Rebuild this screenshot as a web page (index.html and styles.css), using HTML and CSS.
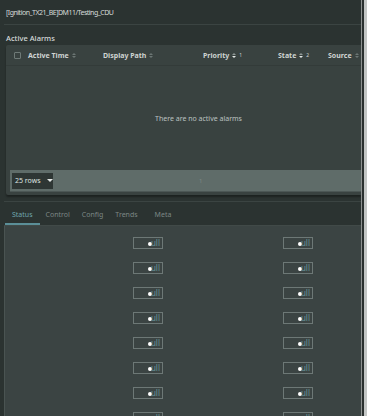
FILE: index.html
```html
<!DOCTYPE html>
<html lang="en">
<head>
  <meta charset="UTF-8">
  <meta name="viewport" content="width=device-width, initial-scale=1.0">
  <title>Testing_CDU</title>
  <link rel="stylesheet" href="styles.css">
</head>
<body>

  <div class="frame">
    <div class="main">
      <p class="title">[Ignition_TX21_BE]DM11/Testing_CDU</p>

      <p class="section-label">Active Alarms</p>
      <div class="alarm-panel">
        <div class="alarm-header">
          <span class="col col-check"><span class="checkbox"></span></span>
          <span class="col col-time">Active Time <span class="sort"></span></span>
          <span class="col col-path">Display Path <span class="sort"></span></span>
          <span class="col col-priority">Priority <span class="sort sort-on"></span><sup>1</sup></span>
          <span class="col col-state">State <span class="sort sort-on"></span><sup>2</sup></span>
          <span class="col col-source">Source <span class="sort"></span></span>
        </div>
        <div class="alarm-body">There are no active alarms</div>
        <div class="alarm-footer">
          <span class="rows-select">25 rows <span class="caret"></span></span>
          <span class="page-num">1</span>
        </div>
      </div>

      <div class="tabs">
        <span class="tab active">Status</span>
        <span class="tab">Control</span>
        <span class="tab">Config</span>
        <span class="tab">Trends</span>
        <span class="tab">Meta</span>
      </div>

      <div class="status-grid">
        <span class="led"><i></i>ull</span><span class="led"><i></i>ull</span>
        <span class="led"><i></i>ull</span><span class="led"><i></i>ull</span>
        <span class="led"><i></i>ull</span><span class="led"><i></i>ull</span>
        <span class="led"><i></i>ull</span><span class="led"><i></i>ull</span>
        <span class="led"><i></i>ull</span><span class="led"><i></i>ull</span>
        <span class="led"><i></i>ull</span><span class="led"><i></i>ull</span>
        <span class="led"><i></i>ull</span><span class="led"><i></i>ull</span>
        <span class="led"><i></i>ull</span><span class="led"><i></i>ull</span>
      </div>
    </div>

    <div class="scrollbar"><div class="thumb"></div></div>
  </div>

</body>
</html>
```

FILE: styles.css
```css
body {
  margin: 0;
  background-color: #2b3331;
  color: #c9cfcd;
  font-family: "Noto Sans", "Open Sans", sans-serif;
  font-size: 7px;
  overflow: hidden;
}

p {
  margin: 0;
}

.frame {
  display: flex;
  width: 367px;
  height: 416px;
  overflow: hidden;
}

.main {
  flex: 1;
  min-width: 0;
  display: flex;
  flex-direction: column;
}

.main > * {
  flex-shrink: 0;
}

.title {
  height: 24px;
  line-height: 25px;
  margin-left: 4px;
  padding-left: 2px;
  border-bottom: 1px solid #3b4442;
  color: #d6dbd9;
  letter-spacing: -0.5px;
}

.section-label {
  padding: 7px 0 0 6px;
  height: 13px;
  line-height: 13px;
  font-size: 7.5px;
  font-weight: 500;
  color: #d6dbd9;
}

.alarm-panel {
  margin-left: 6px;
  height: 150px;
  background-color: #394240;
  border-radius: 2px 0 0 2px;
  box-shadow: 0 2px 2px rgba(0, 0, 0, 0.35);
  display: flex;
  flex-direction: column;
}

.alarm-header {
  height: 20px;
  flex-shrink: 0;
  display: flex;
  align-items: center;
  border-bottom: 1px solid #333b39;
  font-weight: bold;
  color: #cfd4d2;
  white-space: nowrap;
}

.col {
  display: flex;
  align-items: center;
}

.col-check {
  width: 22px;
  padding-left: 8px;
  box-sizing: border-box;
}

.checkbox {
  width: 5px;
  height: 5px;
  border: 1px solid #6f7a77;
  border-radius: 1px;
}

.col-time {
  width: 75px;
}

.col-path {
  width: 100px;
}

.col-priority {
  width: 75px;
}

.col-state {
  width: 50px;
}

.sort {
  display: inline-flex;
  flex-direction: column;
  gap: 1px;
  margin-left: 3px;
}

.sort::before,
.sort::after {
  content: "";
  width: 0;
  height: 0;
  border-left: 2.5px solid transparent;
  border-right: 2.5px solid transparent;
}

.sort::before {
  border-bottom: 2.5px solid #6c7674;
}

.sort::after {
  border-top: 2.5px solid #6c7674;
}

.sort-on::after {
  border-top-color: #e4e8e6;
}

.sort-on::before {
  border-bottom-color: #8f9896;
}

sup {
  font-size: 5px;
  font-weight: normal;
  vertical-align: 2px;
  margin-left: 3px;
}

.alarm-body {
  flex: 1;
  display: flex;
  align-items: center;
  justify-content: center;
  padding-left: 30px;
  color: #bcc3c1;
}

.alarm-footer {
  flex-shrink: 0;
  margin: 0 0 3px 4px;
  height: 21px;
  background-color: #5f6c69;
  display: flex;
  align-items: center;
  border-bottom: 1px solid #4c5755;
}

.rows-select {
  margin-left: 2px;
  height: 16px;
  width: 38px;
  padding-left: 3px;
  display: flex;
  align-items: center;
  gap: 6px;
  white-space: nowrap;
  background-color: #2e3634;
  color: #dfe3e1;
}

.caret {
  width: 0;
  height: 0;
  border-left: 3px solid transparent;
  border-right: 3px solid transparent;
  border-top: 3px solid #e6e9e8;
}

.page-num {
  margin-left: 146px;
  color: #7d8886;
  font-size: 6px;
}

.tabs {
  margin: 6px 0 0 4px;
  padding: 5px 0 0 1px;
  border-top: 1px solid #3b4442;
  border-bottom: 1px solid #414a48;
  display: flex;
}

.tab {
  padding: 0 6px;
  line-height: 16px;
  color: #7c8785;
  border-bottom: 2px solid transparent;
}

.tab:first-child {
  padding: 0 7px;
}

.tab:last-child {
  margin-left: 5px;
}

.tab.active {
  color: #6fa6ae;
  border-bottom-color: #5b8f98;
}

.status-grid {
  flex: 1;
  margin-left: 4px;
  background-color: #3b4443;
  border-left: 1px solid #4a5452;
  display: grid;
  grid-template-columns: 30px 30px;
  grid-auto-rows: 25px;
  column-gap: 120px;
  padding: 11px 0 0 128px;
}

.led {
  width: 26px;
  height: 10px;
  border: 1px solid #6d7876;
  display: flex;
  align-items: center;
  justify-content: flex-end;
  padding-right: 2px;
  color: #64939a;
  font-size: 8px;
  line-height: 10px;
}

.led i {
  width: 4px;
  height: 4px;
  border-radius: 50%;
  background-color: #ffffff;
  margin-right: -1px;
  margin-top: 2px;
}

.scrollbar {
  width: 6px;
  background-color: #2a302f;
  border-left: 1px solid #8d9190;
  box-sizing: border-box;
  display: flex;
  justify-content: flex-end;
}

.thumb {
  width: 3px;
  background-color: #c3c6c5;
}
```
